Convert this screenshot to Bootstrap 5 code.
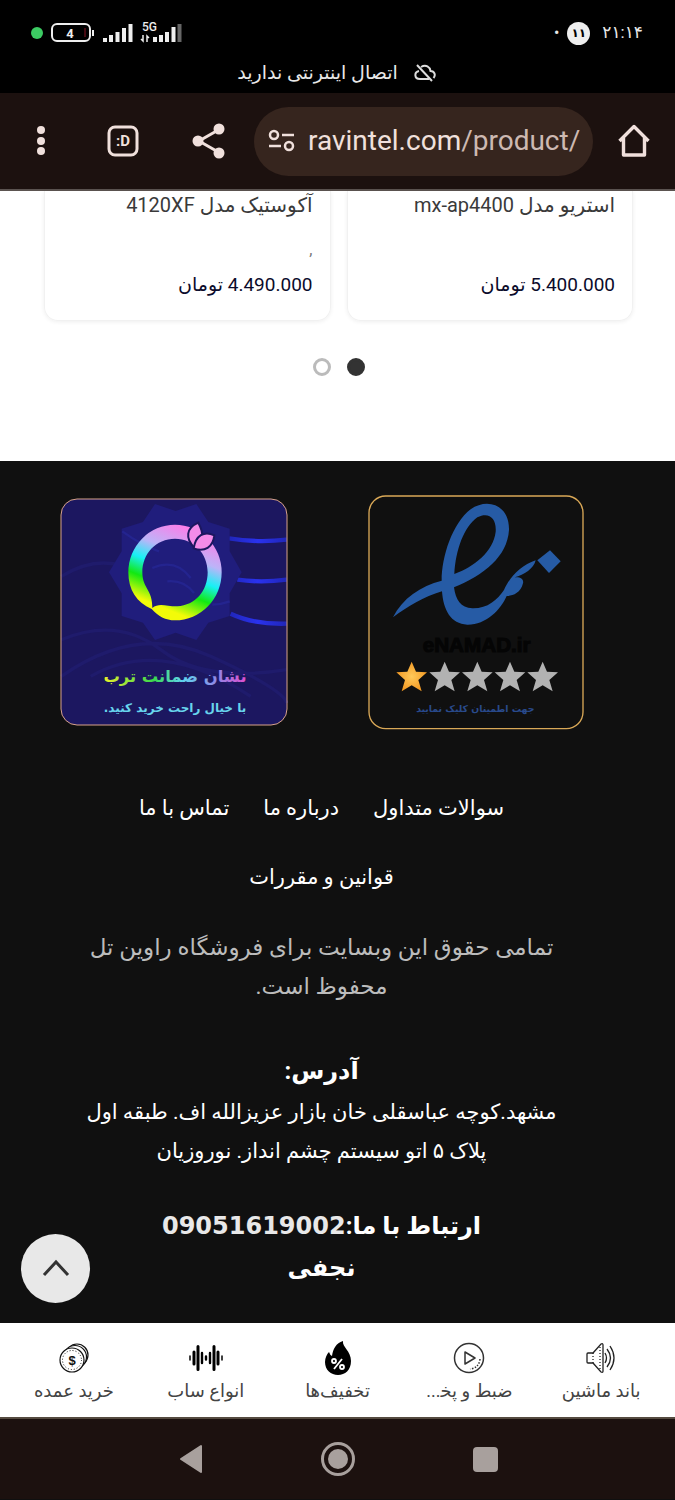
<!DOCTYPE html>
<html lang="fa" dir="rtl">
<head>
<meta charset="utf-8">
<meta name="viewport" content="width=device-width, initial-scale=1">
<title>راوین تل</title>
<link href="https://cdn.jsdelivr.net/npm/bootstrap@5.3.0/dist/css/bootstrap.min.css" rel="stylesheet">
<style>
  body { font-family: Roboto, "DejaVu Sans", sans-serif; background: #101010; color: #333; }
  button { font: inherit; color: inherit; background: none; border: 0; padding: 0; }
  svg { display: block; flex: none; }
  .status-bar { background: #000; color: #e8e8e8; height: 93px; padding: 21px 32px 0 30px; }
  .status-row { height: 24px; }
  .clock { font-size: 17px; }
  .count-pill { width: 23px; height: 23px; background: #eee; color: #000; font-size: 12px; font-weight: 700; line-height: 23px; }
  .offline-note { font-size: 19px; line-height: 24px; margin-top: 16px; }
  .browser-bar { background: #1c110f; color: #f0e0dc; height: 98px; padding: 0 24px 0 24px; border-bottom: 2px solid #5b5350; }
  .url-box { background: #36251e; height: 69px; border-radius: 35px; padding: 0 10px 0 14px; margin-left: 28px; margin-right: 24px; min-width: 0; }
  .url-text { font-size: 28px; white-space: nowrap; }
  .url-text span { color: #cdb9b2; }
  .products { background: #fff; padding: 0 42px 85px 44px; }
  .product { border: 1px solid #f1f1f1; border-top: 0; border-radius: 0 0 14px 14px; box-shadow: 0 1px 4px #0001; height: 130px; padding: 0 17px; font-size: 20px; line-height: 28px; }
  .product h2 { font-size: 20px; line-height: 28px; font-weight: 400; margin: 0 0 17px; color: #3a3a3a; white-space: nowrap; }
  .note { height: 35px; margin: 0; color: #777; font-size: 16px; }
  .price { color: #0b0b2b; font-size: 19px; white-space: nowrap; }
  .pager { gap: 16px; margin-top: 37px; }
  .pager button { width: 18px; height: 18px; border-radius: 50%; border: 3px solid #bbb; }
  .pager button.active { background: #333; border-color: #333; }
  .site-footer { background: #101010; color: #fff; padding: 34px 54px 34px 22px; font-size: 21px; line-height: 39px; }
  .torob { width: 228px; }
  .enamad { width: 216px; }
  .seals { gap: 80px; padding-left: 38px; justify-content: flex-end; }
  .footer-links { margin: 59px 0 31px; column-gap: 34px; row-gap: 30px; }
  .footer-links a { color: #fff; text-decoration: none; }
  .rights { color: #bcbcbc; font-size: 23px; margin-bottom: 46px; }
  .site-footer h3 { font-size: 24px; line-height: 39px; font-weight: 700; margin: 0 0 2px; }
  .phone { font-family: "DejaVu Sans", sans-serif; color: #e8e8e8; text-decoration: none; }
  .contact { font-size: 24px; line-height: 42px; font-weight: 700; margin-top: 34px; }
  .to-top { position: absolute; left: 21px; bottom: 20px; width: 69px; height: 69px; border-radius: 50%; background: #e8e8e8; }
  .tab-bar { background: #fff; border-bottom: 2px solid #554b40; padding: 16px 8px 0; height: 96px; }
  .tab-bar a { flex: 1 1 0; color: #444; text-decoration: none; font-size: 18px; line-height: 27px; white-space: nowrap; }
  .tab-bar svg { width: 38px; height: 38px; }
  .system-nav { background: #1c110f; height: 80px; gap: 112px; }
</style>
</head>
<body>
<header>
  <div class="status-bar">
    <div class="status-row d-flex justify-content-between align-items-center" dir="ltr">
      <svg width="156" height="24" viewBox="0 0 156 24" font-family="Roboto, sans-serif">
        <circle cx="7" cy="12" r="6" fill="#3ccb63"/>
        <rect x="22" y="3" width="38" height="17" rx="5" fill="none" stroke="#eee" stroke-width="2"/>
        <path d="M55 7v9" stroke="#8d1425" stroke-width="1"/><rect x="62" y="9" width="2" height="6" fill="#eee"/>
        <text x="40" y="17" font-size="13" font-weight="700" fill="#eee" text-anchor="middle">4</text>
        <path d="M75 21v-4M81 21v-7M87.500 21v-10M94 21v-14M100.500 21v-18" stroke="#eee" stroke-width="4"/>
        <path d="M125 21v-5M131 21v-7M137 21v-10M143.500 21v-15" stroke="#eee" stroke-width="4"/>
        <path d="M149.500 21v-18" stroke="#666" stroke-width="4"/>
        <path d="M113 14v6l-2-2M117 21v-6l2 2" stroke="#eee" stroke-width="1.500" fill="none"/>
        <text x="112" y="10" font-size="12" font-weight="500" fill="#eee">5G</text>
      </svg>
      <div class="d-flex align-items-center gap-2">
        <span>•</span>
        <span class="count-pill rounded-circle text-center">۱۱</span>
        <span class="clock ms-1">۲۱:۱۴</span>
      </div>
    </div>
    <div class="offline-note d-flex justify-content-center align-items-center">
      <svg class="ms-3" width="22" height="18" viewBox="0 0 22 18" fill="none" stroke="#ddd" stroke-width="2"><path d="M7 3c5-3 9 0 9.500 4 4 0 5.500 4 3 7M15 15H6c-6 0-6-7-1-8M3 1l15 16"/></svg>
      <span>اتصال اینترنتی ندارید</span>
    </div>
  </div>
  <nav class="browser-bar d-flex align-items-center" dir="ltr" aria-label="مرورگر">
    <button aria-label="منو"><svg width="34" height="34" viewBox="0 0 34 34" fill="currentColor"><circle cx="17" cy="6" r="4"/><circle cx="17" cy="17" r="4"/><circle cx="17" cy="27" r="4"/></svg></button>
    <button class="ms-5" aria-label="زبانه‌ها"><svg width="34" height="34" viewBox="0 0 34 34"><rect x="3" y="3" width="28" height="28" rx="6" fill="none" stroke="currentColor" stroke-width="3"/><text x="17" y="22" font-family="Roboto, sans-serif" font-size="15" font-weight="700" fill="currentColor" text-anchor="middle">:D</text></svg></button>
    <button class="ms-5" aria-label="اشتراک‌گذاری"><svg width="38" height="38" viewBox="0 0 38 38"><path d="M32 7 11 19l21 12" fill="none" stroke="currentColor" stroke-width="3"/><g fill="currentColor"><circle cx="31" cy="7" r="5.500"/><circle cx="10" cy="19" r="5.500"/><circle cx="31" cy="31" r="5.500"/></g></svg></button>
    <button class="url-box d-flex align-items-center flex-grow-1">
      <svg width="28" height="26" viewBox="0 0 28 26" fill="none" stroke="currentColor" stroke-width="2.500"><circle cx="6" cy="7" r="4"/><circle cx="21" cy="18" r="4"/><path d="M14 7h12M1 18h12"/></svg>
      <span class="url-text ms-2 ps-1 text-start">ravintel.com<span>/product/</span></span>
    </button>
    <button aria-label="خانه"><svg width="34" height="34" viewBox="0 0 34 34" fill="none" stroke="currentColor" stroke-width="3.400" stroke-linejoin="round"><path d="M2.500 17 17 2.500 31.500 17M6.500 14v17h21V14"/></svg></button>
  </nav>
</header>

<main class="products">
  <div class="row gx-3">
    <div class="col-6"><article class="product"><h2>استریو مدل mx-ap4400</h2><p class="note"></p><div class="price">5.400.000 تومان</div></article></div>
    <div class="col-6"><article class="product"><h2>آکوستیک مدل 4120XF</h2><p class="note">,</p><div class="price">4.490.000 تومان</div></article></div>
  </div>
  <div class="pager d-flex justify-content-center">
    <button class="active" aria-label="صفحه ۱"></button><button aria-label="صفحه ۲"></button>
  </div>
</main>

<footer class="site-footer position-relative text-center">
  <div class="seals d-flex align-items-center">
    <a href="#" class="enamad" aria-label="eNAMAD"><svg class="w-100" viewBox="22 15 648 704">
      <rect x="25" y="18" width="642" height="698" rx="50" fill="none" stroke="#d9a857" stroke-width="4"/>
      <g fill="#265ba5"><path fill-rule="evenodd" d="M97 382C125 325 180 288 243 272C243 200 275 100 330 58C380 22 447 45 445 120C440 200 370 255 280 292C285 330 300 354 335 355C380 356 410 330 430 300C445 265 480 225 525 211C520 235 490 255 462 262C480 260 490 268 487 280C480 310 455 318 438 318C420 360 375 405 320 404C270 402 248 360 244 304C190 320 140 350 97 382ZM281 252C285 180 310 110 350 82C385 65 408 85 405 125C398 185 340 230 281 252Z"/><path d="m568 181 32 33-35 35-35-38z"/></g>
      <text x="348" y="486" font-family="Liberation Sans, sans-serif" font-size="62" font-weight="700" fill="#050505" stroke="#050505" stroke-width="3" text-anchor="middle">eNAMAD.ir</text>
      <defs><path id="star" d="M0-47 13-17 46-15 20 8 30 42 0 24-30 42-20 8-46-15-13-17Z"/><radialGradient id="gold"><stop stop-color="#ffc95a"/><stop offset="1" stop-color="#f39a24"/></radialGradient></defs>
      <use href="#star" x="153" y="562" fill="url(#gold)"/>
      <g fill="#b2b2b2"><use href="#star" x="252" y="562"/><use href="#star" x="350" y="562"/><use href="#star" x="448" y="562"/><use href="#star" x="546" y="562"/></g>
      <text x="344" y="667" font-family="DejaVu Sans, sans-serif" font-size="28" font-weight="700" fill="#294a8c" text-anchor="middle">جهت اطمینان کلیک نمایید</text>
    </svg></a>
    <a href="#" class="torob" aria-label="ترب"><svg class="w-100" viewBox="28 25 684 684">
      <defs>
        <linearGradient id="ring" gradientUnits="userSpaceOnUse" x1="440" y1="120" x2="326" y2="402"><stop stop-color="#ff7be8"/><stop offset=".28" stop-color="#bcb4f8"/><stop offset=".46" stop-color="#18f0f5"/><stop offset=".63" stop-color="#12e812"/><stop offset=".84" stop-color="#f3fb08"/></linearGradient>
        <linearGradient id="words" gradientUnits="userSpaceOnUse" x1="160" y1="0" x2="585" y2="0"><stop stop-color="#e8f02c"/><stop offset=".35" stop-color="#39d84d"/><stop offset=".55" stop-color="#5fd5ee"/><stop offset=".78" stop-color="#8b8be8"/><stop offset="1" stop-color="#dd4fd0"/></linearGradient>
        <linearGradient id="wave"><stop stop-color="#2026b8"/><stop offset=".5" stop-color="#2a32ee"/><stop offset="1" stop-color="#2026b8"/></linearGradient>
      </defs>
      <rect x="31" y="28" width="678" height="678" rx="48" fill="#1c1760"/>
      <g fill="none" stroke="#1f1b6c" stroke-width="10"><path d="M32 260Q130 200 220 230M32 450Q200 380 330 480T708 540M32 560Q260 400 480 500T708 640M120 560Q330 440 600 620"/></g>
      <g fill="none" stroke="url(#wave)" stroke-width="13"><path d="M535 146Q620 160 708 150M560 270Q630 280 708 270M540 372Q610 405 708 402"/></g>
      <path d="m313 43 62 21 62-21 36 54 64 20v68l36 63-36 63v68l-64 20-36 52-62-22-62 22-36-52-64-20v-68l-38-63 38-63v-68l64-20z" fill="#201d7c"/>
      <g fill="none" stroke="#24248f" stroke-width="7"><path d="M305 235q70-30 115 30M350 275q50-5 80 35M215 125q55 40 110 60M485 345q25 0 52-10"/></g>
      <path fill="url(#ring)" fill-rule="evenodd" d="M303 358C258 340 233 300 233 248A140 143 0 0 1 513 248A140 144 0 0 1 373 392C345 392 322 380 303 358ZM373 147C316 147 275 192 275 248C275 296 306 300 305 355C325 337 350 351 380 350C434 347 471 304 471 248C471 192 430 147 373 147Z"/>
      <g fill="#f48be9" stroke="#1c1760" stroke-width="6"><path d="M432 175C402 145 407 115 443 99C462 135 458 153 432 175Z"/><path d="M429 176C435 138 460 122 491 137C487 172 462 189 429 176Z"/></g>
      <text x="373" y="576" font-family="DejaVu Sans, sans-serif" font-size="49" font-weight="700" fill="url(#words)" text-anchor="middle">نشان ضمانت ترب</text>
      <text x="373" y="668" font-family="DejaVu Sans, sans-serif" font-size="36" font-weight="700" fill="#68d5ed" text-anchor="middle">با خیال راحت خرید کنید.</text>
      <rect x="31" y="28" width="678" height="678" rx="48" fill="none" stroke="#d9a38a" stroke-width="3"/>
    </svg></a>
  </div>
  <nav class="footer-links d-flex flex-wrap justify-content-center px-5">
    <a href="#">سوالات متداول</a><a href="#">درباره ما</a><a href="#">تماس با ما</a><a href="#">قوانین و مقررات</a>
  </nav>
  <p class="rights">تمامی حقوق این وبسایت برای فروشگاه راوین تل<br>محفوظ است.</p>
  <h3>آدرس:</h3>
  <div>مشهد.کوچه عباسقلی خان بازار عزیزالله اف. طبقه اول<br>پلاک ۵ اتو سیستم چشم انداز. نوروزیان</div>
  <div class="contact">ارتباط با ما:<a class="phone" href="tel:09051619002">09051619002</a><br>نجفی</div>
  <button class="to-top d-flex align-items-center justify-content-center" aria-label="بالا"><svg width="28" height="20" viewBox="0 0 28 20" fill="none" stroke="#333" stroke-width="3"><path d="M2 17 14 4l12 13"/></svg></button>
</footer>

<nav class="tab-bar d-flex">
  <a href="#" class="d-flex flex-column align-items-center"><svg viewBox="0 0 38 38" fill="none" stroke="#222" stroke-width="1.300"><path d="M6 14h5l8-9q2-1 2 1v26q0 2-2 1l-8-9H6q-1 0-1-1v-8q0-1 1-1ZM23 14q3 5 0 10M25 10q7 9 0 18M28 7q8 12 0 24"/><path d="M11 14v10M18 8v23" stroke-dasharray="1 2"/></svg>باند ماشین</a>
  <a href="#" class="d-flex flex-column align-items-center"><svg viewBox="0 0 38 38" fill="none" stroke="#333" stroke-width="1.500"><circle cx="19" cy="19" r="14.500"/><path d="m15 13 10 6-10 6z" stroke-linejoin="round"/><path d="M30 20q-1 9-10 10" stroke-dasharray="1.500 1.500"/></svg>ضبط و پخ&zwj;...</a>
  <a href="#" class="d-flex flex-column align-items-center"><svg viewBox="0 0 38 38"><path fill="#000" d="M24 2c-1 6 8 10 8 20 0 9-6 14-13 14S6 31 6 23c0-4 2-8 4-10 1 2 1 3 3 4 1-7 4-13 11-15Z"/><g fill="none" stroke="#fff" stroke-width="1.800"><circle cx="15" cy="22" r="2"/><circle cx="23" cy="28" r="2"/><path d="m23 20-8 10"/></g></svg>تخفیف‌ها</a>
  <a href="#" class="d-flex flex-column align-items-center"><svg viewBox="0 0 38 38" stroke="#000" stroke-linecap="round"><path stroke-width="3" d="M11 7.500v23M27 7.500v23M7 13v12M31 13v12"/><path stroke-width="2.400" d="M15 14v10M23 14v10M19 17.500v3"/><path stroke-width="1.500" d="M3 17v4M35 17v4"/></svg>انواع ساب</a>
  <a href="#" class="d-flex flex-column align-items-center"><svg viewBox="0 0 38 38" fill="#fff" stroke="#111" stroke-width="1.200"><circle cx="22" cy="16" r="11"/><circle cx="20" cy="18" r="11.500"/><circle cx="17" cy="21" r="12"/><circle cx="17" cy="21" r="9.500" stroke-dasharray="1 2" stroke-width="1"/><text x="17" y="26" font-family="Liberation Sans, sans-serif" font-size="13" font-weight="700" fill="#111" stroke="none" text-anchor="middle">$</text></svg>خرید عمده</a>
</nav>
<nav class="system-nav d-flex justify-content-center align-items-center" dir="ltr">
  <button aria-label="بازگشت"><svg width="34" height="34" viewBox="0 0 34 34"><path d="M7 17 27 4v26z" fill="#a8a09d" stroke="#a8a09d" stroke-width="2" stroke-linejoin="round"/></svg></button>
  <button aria-label="خانه"><svg width="36" height="36" viewBox="0 0 36 36"><circle cx="18" cy="18" r="15.500" fill="none" stroke="#a8a09d" stroke-width="3"/><circle cx="18" cy="18" r="10" fill="#a8a09d"/></svg></button>
  <button aria-label="برنامه‌ها"><svg width="34" height="34" viewBox="0 0 34 34"><rect x="5" y="5" width="25" height="25" rx="4" fill="#a8a09d"/></svg></button>
</nav>
<script src="https://cdn.jsdelivr.net/npm/bootstrap@5.3.0/dist/js/bootstrap.bundle.min.js"></script>
</body>
</html>
